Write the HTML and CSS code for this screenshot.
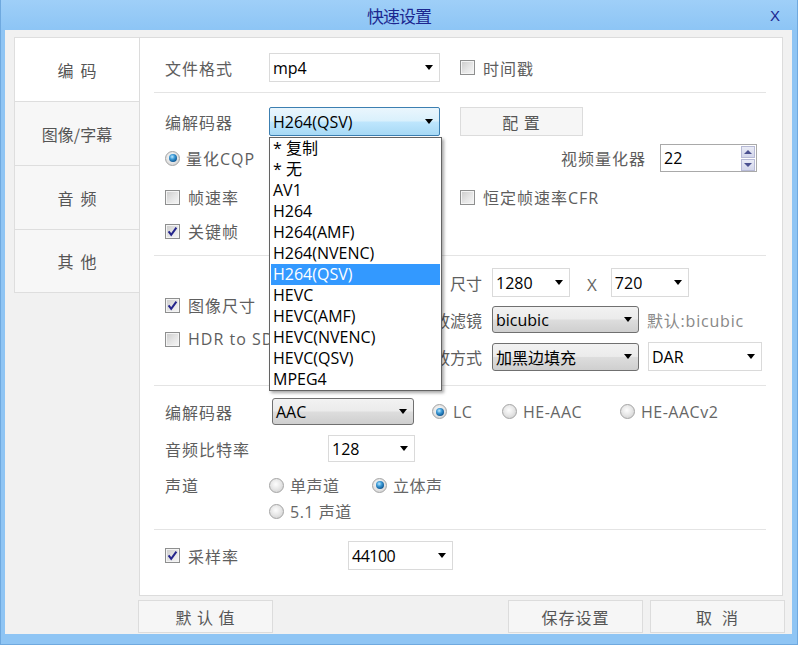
FILE: index.html
```html
<!DOCTYPE html>
<html lang="zh-CN">
<head>
<meta charset="utf-8">
<title>快速设置</title>
<link rel="stylesheet" href="styles.css">
</head>
<body>
<div class="window">
  <div class="titlebar">
    <span></span>
    <span class="title">快速设置</span>
    <span class="close">X</span>
  </div>
  <div class="client">
    <div class="body">
      <nav class="tabs">
        <div class="tab active">编&nbsp;&nbsp;码</div>
        <div class="tab">图像/字幕</div>
        <div class="tab">音&nbsp;&nbsp;频</div>
        <div class="tab">其&nbsp;&nbsp;他</div>
      </nav>
      <div class="panel">
        <section class="section s1">
          <div class="row h29">
            <span class="label w104">文件格式</span>
            <div class="combo white w171 h29"><span>mp4</span><i class="arrow"></i></div>
            <label class="check ml20"><span class="cb"></span><span class="label">时间戳</span></label>
          </div>
        </section>

        <section class="section s2">
          <div class="row h29">
            <span class="label w104">编解码器</span>
            <div class="combo blue w171 h29"><span>H264(QSV)</span><i class="arrow"></i></div>
            <div class="btn cfg">配&nbsp;置</div>
          </div>
          <div class="row h28 mt8">
            <label class="check"><span class="rb on"></span><span class="label">量化CQP</span></label>
            <span class="label push">视频量化器</span>
            <div class="spin">
              <span>22</span>
              <div class="spin-btns"><span class="up"></span><span class="down"></span></div>
            </div>
          </div>
          <div class="row h20 mt15">
            <label class="check w295"><span class="cb"></span><span class="label">帧速率</span></label>
            <label class="check"><span class="cb"></span><span class="label">恒定帧速率CFR</span></label>
          </div>
          <div class="row h20 mt14">
            <label class="check"><span class="cb on"><svg viewBox="0 0 13 13"><path d="M2.6 6.4 L5.2 9.8 L10.4 2.6"/></svg></span><span class="label">关键帧</span></label>
          </div>
        </section>

        <section class="section s3">
          <div class="col-left">
            <label class="check h20"><span class="cb on"><svg viewBox="0 0 13 13"><path d="M2.6 6.4 L5.2 9.8 L10.4 2.6"/></svg></span><span class="label">图像尺寸</span></label>
            <label class="check h20"><span class="cb"></span><span class="label">HDR to SDR</span></label>
          </div>
          <div class="col-right">
            <div class="row h29">
              <span class="label rlabel">尺寸</span>
              <div class="combo white w78 h29"><span>1280</span><i class="arrow"></i></div>
              <span class="times">X</span>
              <div class="combo white w78 h29"><span>720</span><i class="arrow"></i></div>
            </div>
            <div class="row h29">
              <span class="label rlabel">缩放滤镜</span>
              <div class="combo grey w147 h27"><span>bicubic</span><i class="arrow"></i></div>
              <span class="hint">默认:bicubic</span>
            </div>
            <div class="row h29">
              <span class="label rlabel">缩放方式</span>
              <div class="combo grey w147 h28"><span>加黑边填充</span><i class="arrow"></i></div>
              <div class="combo white w114 h29 ml9"><span>DAR</span><i class="arrow"></i></div>
            </div>
          </div>
        </section>

        <section class="section s4">
          <div class="row h27">
            <span class="label w107">编解码器</span>
            <div class="combo grey w142 h27"><span>AAC</span><i class="arrow"></i></div>
            <label class="check opt w70 ml18"><span class="rb on"></span><span class="label">LC</span></label>
            <label class="check opt w118"><span class="rb"></span><span class="label">HE-AAC</span></label>
            <label class="check opt"><span class="rb"></span><span class="label">HE-AACv2</span></label>
          </div>
          <div class="row h27 mt10">
            <span class="label w163">音频比特率</span>
            <div class="combo white w87 h27"><span>128</span><i class="arrow"></i></div>
          </div>
          <div class="row h20 mt13">
            <span class="label w104">声道</span>
            <label class="check opt w103"><span class="rb"></span><span class="label">单声道</span></label>
            <label class="check opt"><span class="rb on"></span><span class="label">立体声</span></label>
          </div>
          <div class="row h20 mt6 indent104">
            <label class="check opt"><span class="rb"></span><span class="label">5.1 声道</span></label>
          </div>
        </section>

        <section class="section s5">
          <div class="row h29">
            <label class="check w183"><span class="cb on"><svg viewBox="0 0 13 13"><path d="M2.6 6.4 L5.2 9.8 L10.4 2.6"/></svg></span><span class="label">采样率</span></label>
            <div class="combo white w105 h29 narrow"><span>44100</span><i class="arrow"></i></div>
          </div>
        </section>

        <ul class="droplist">
          <li>* 复制</li>
          <li>* 无</li>
          <li>AV1</li>
          <li>H264</li>
          <li>H264(AMF)</li>
          <li>H264(NVENC)</li>
          <li class="sel">H264(QSV)</li>
          <li>HEVC</li>
          <li>HEVC(AMF)</li>
          <li>HEVC(NVENC)</li>
          <li>HEVC(QSV)</li>
          <li>MPEG4</li>
        </ul>
      </div>
    </div>
    <div class="buttons">
      <div class="btn big">默&nbsp;认&nbsp;值</div>
      <div class="btn big push">保存设置</div>
      <div class="btn big">取&nbsp;&nbsp;消</div>
    </div>
  </div>
</div>
</body>
</html>
```

FILE: styles.css
```css
* { box-sizing: border-box; }

html, body {
  margin: 0;
  padding: 0;
  background: #8fc4f3;
}

body {
  font-family: "Open Sans", "Noto Sans CJK SC", sans-serif;
  font-size: 16px;
  color: #000;
}

.window {
  width: 798px;
  height: 645px;
  display: flex;
  flex-direction: column;
  padding-bottom: 10px;
  background: #8fc5f4;
  overflow: hidden;
  border-left: 1px solid #6fa9df;
  border-right: 1px solid #6fa9df;
  border-bottom: 1px solid #6fa9df;
}

.titlebar {
  height: 30px;
  flex: none;
  display: grid;
  grid-template-columns: 1fr auto 1fr;
  align-items: center;
  background: linear-gradient(#9fcff8, #8dc5f5);
}

.title {
  font-family: "Noto Sans CJK SC", sans-serif;
  font-size: 17px;
  color: #1c2790;
  letter-spacing: -1px;
}

.close {
  justify-self: end;
  margin-right: 17px;
  font-family: "Liberation Sans", sans-serif;
  font-size: 15px;
  color: #1c2790;
}

.client {
  flex: 1;
  margin: 0 5px 0 4px;
  background: #f1f1f1;
  padding: 7px 9px 0 9px;
  display: flex;
  flex-direction: column;
}

.body {
  display: grid;
  grid-template-columns: 125px 644px;
  height: 559px;
}

.tabs {
  align-self: start;
  border-top: 1px solid #dedede;
  border-left: 1px solid #dedede;
  background: #f7f7f7;
}

.tab {
  height: 64px;
  border-bottom: 1px solid #dedede;
  display: flex;
  align-items: center;
  justify-content: center;
  color: #555;
  font-family: "Noto Sans CJK SC", sans-serif;
  font-size: 16px;
}

.tab:last-child { height: 63px; }

.tab.active { background: #fff; }

.panel {
  position: relative;
  background: #fff;
  border: 1px solid #dcdcdc;
}

.section {
  margin: 0 16px 0 14px;
  padding-left: 11px;
  border-bottom: 1px solid #e4e4e4;
}

.section.s5 { border-bottom: none; }

.s1 { padding-top: 15px; padding-bottom: 10px; }
.s2 { padding-top: 14px; padding-bottom: 14px; }
.s3 { padding-top: 12px; padding-bottom: 14px; display: flex; }
.s4 { padding-top: 12px; padding-bottom: 8px; }
.s5 { padding-top: 11px; }

.row { display: flex; align-items: center; }

.h20 { height: 20px; }
.h27 { height: 27px; }
.h28 { height: 28px; }
.h29 { height: 29px; }

.mt6 { margin-top: 6px; }
.mt8 { margin-top: 8px; }
.mt10 { margin-top: 10px; }
.mt13 { margin-top: 13px; }
.mt14 { margin-top: 14px; }
.mt15 { margin-top: 15px; }
.ml9 { margin-left: 9px; }
.ml18 { margin-left: 18px; }
.ml20 { margin-left: 20px; }

.w70 { width: 70px; flex: none; }
.w78 { width: 78px; flex: none; }
.w87 { width: 87px; flex: none; }
.w103 { width: 103px; flex: none; }
.w104 { width: 104px; flex: none; }
.w105 { width: 105px; flex: none; }
.w107 { width: 107px; flex: none; }
.w114 { width: 114px; flex: none; }
.w118 { width: 118px; flex: none; }
.w142 { width: 142px; flex: none; }
.w147 { width: 147px; flex: none; }
.w163 { width: 163px; flex: none; }
.w171 { width: 171px; flex: none; }
.w183 { width: 183px; flex: none; }
.w295 { width: 295px; flex: none; }

.indent104 { padding-left: 104px; }

.label {
  color: #5e5e5e;
  letter-spacing: 1px;
  white-space: nowrap;
}

.check {
  display: flex;
  align-items: center;
}

.check .cb { margin-right: 8px; }
.check .rb { margin-right: 6px; }

.opt .label { letter-spacing: 0.5px; color: #666; }

.cb {
  width: 15px;
  height: 15px;
  flex: none;
  border: 1px solid #8e8f8f;
  box-shadow: inset 0 0 0 1px #f4f4f4;
  background: linear-gradient(135deg, #cbcbcb 0%, #e6e6e6 55%, #f6f6f6 100%);
  display: flex;
  align-items: center;
  justify-content: center;
}

.cb svg {
  width: 13px;
  height: 13px;
}

.cb svg path {
  fill: none;
  stroke: #25268c;
  stroke-width: 2;
}

.rb {
  width: 15px;
  height: 15px;
  flex: none;
  border-radius: 50%;
  border: 1px solid #a4a4a4;
  background: radial-gradient(circle at 45% 40%, #fdfdfd 0%, #e8e8e8 45%, #c9c9c9 100%);
  display: flex;
  align-items: center;
  justify-content: center;
}

.rb.on::after {
  content: "";
  width: 8px;
  height: 8px;
  border-radius: 50%;
  background: radial-gradient(circle at 40% 35%, #bfe9ff 0%, #3c9ad6 35%, #135e9a 70%, #0b3c6c 100%);
}

.combo {
  display: flex;
  align-items: center;
  padding-left: 3px;
  white-space: nowrap;
  color: #000;
}

.combo .arrow {
  margin-left: auto;
  margin-right: 6px;
  width: 0;
  height: 0;
  border-left: 4.5px solid transparent;
  border-right: 4.5px solid transparent;
  border-top: 5px solid #000;
}

.combo.white {
  background: #fff;
  border: 1px solid #dadada;
}

.combo.blue {
  border: 1px solid #3c7fb1;
  border-radius: 2px;
  background: linear-gradient(#eaf6fd 0%, #d9f0fc 48%, #bee6fd 52%, #a7d9f5 100%);
}

.combo.grey {
  border: 1px solid #707070;
  border-radius: 3px;
  background: linear-gradient(#f2f2f2 0%, #ebebeb 48%, #dddddd 52%, #cfcfcf 100%);
}

.combo.narrow span {
  letter-spacing: -0.5px;
}

.btn {
  display: flex;
  align-items: center;
  justify-content: center;
  background: #f6f6f6;
  border: 1px solid #dcdcdc;
  color: #555;
  font-family: "Noto Sans CJK SC", sans-serif;
  font-size: 16px;
  letter-spacing: 1px;
}

.btn.cfg {
  width: 123px;
  height: 29px;
  margin-left: 20px;
}

.push { margin-left: auto; }

.row .label.push { margin-right: 14px; }

.spin {
  width: 97px;
  height: 28px;
  margin-right: 9px;
  border: 1px solid #a9a9a9;
  display: flex;
  align-items: center;
  padding-left: 3px;
}

.spin-btns {
  margin-left: auto;
  margin-right: 1px;
  display: flex;
  flex-direction: column;
  gap: 1px;
}

.spin-btns span {
  width: 14px;
  height: 12px;
  background: linear-gradient(#e9ebf6, #d3d6ea);
  border: 1px solid #b7bad6;
  display: flex;
  align-items: center;
  justify-content: center;
}

.spin-btns .up::after {
  content: "";
  border-left: 4px solid transparent;
  border-right: 4px solid transparent;
  border-bottom: 4px solid #4b5190;
}

.spin-btns .down::after {
  content: "";
  border-left: 4px solid transparent;
  border-right: 4px solid transparent;
  border-top: 4px solid #4b5190;
}

.col-left {
  width: 253px;
  flex: none;
  padding-top: 27px;
  display: flex;
  flex-direction: column;
  gap: 14px;
}

.col-right {
  display: flex;
  flex-direction: column;
  gap: 8px;
}

.rlabel {
  width: 64px;
  text-align: right;
  letter-spacing: 0;
  margin-right: 10px;
  flex: none;
}

.times {
  margin: 3px 14px 0 17px;
  color: #666;
  font-size: 17px;
}

.hint {
  margin-left: 8px;
  color: #888;
  letter-spacing: 0.8px;
  white-space: nowrap;
}

.droplist {
  position: absolute;
  left: 129px;
  top: 99px;
  width: 173px;
  margin: 0;
  padding: 0;
  list-style: none;
  background: #fff;
  border: 1px solid #646464;
  box-shadow: 2px 2px 3px rgba(0, 0, 0, 0.35);
}

.droplist li {
  height: 21px;
  line-height: 21px;
  padding-left: 3px;
  white-space: nowrap;
  color: #000;
}

.droplist li.sel {
  background: #3399ff;
  color: #fff;
  margin: 0 1px;
  padding-left: 2px;
}

.buttons {
  display: flex;
  margin-top: 4px;
  padding-left: 124px;
  margin-right: -2px;
  gap: 7px;
}

.btn.big {
  width: 135px;
  height: 33px;
}
```
